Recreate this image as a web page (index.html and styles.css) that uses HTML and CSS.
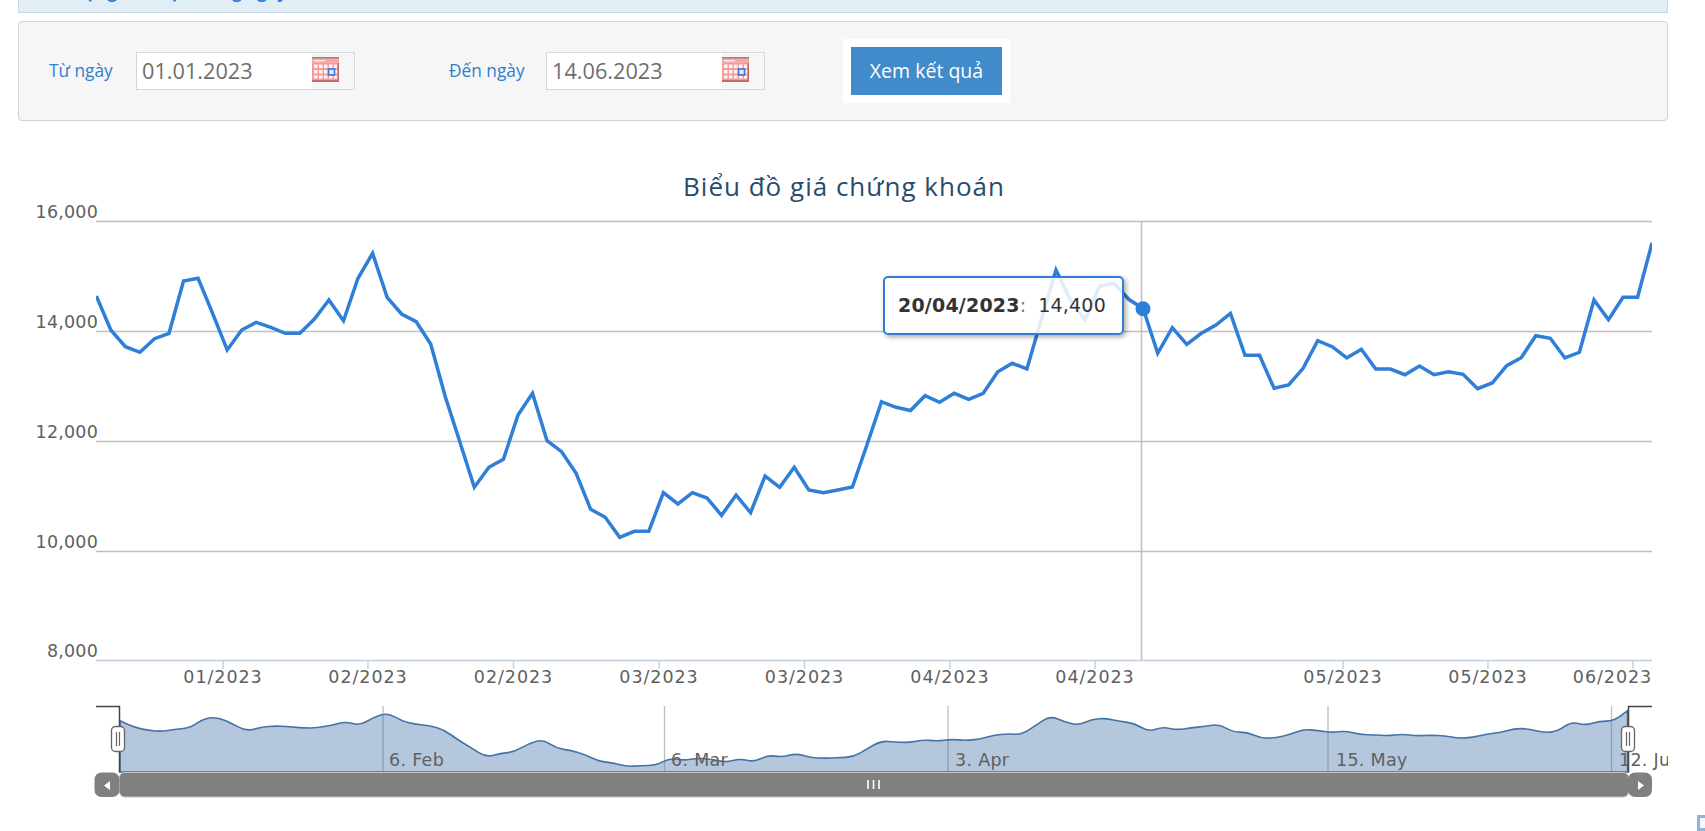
FILE: index.html
```html
<!DOCTYPE html>
<html lang="vi">
<head>
<meta charset="utf-8">
<title>Biểu đồ giá chứng khoán</title>
<link rel="stylesheet" href="styles.css">
</head>
<body>
<div class="page">
  <div class="notice"><span class="notice-text">Khối lượng đã nhận trong ngày</span></div>
  <form class="filter">
    <label class="filter-label label-from">Từ ngày</label>
    <div class="date-field"><span class="date-value">01.01.2023</span>
      <svg class="cal" viewBox="0 0 27 25"><use href="#calicon"/></svg></div>
    <label class="filter-label label-to">Đến ngày</label>
    <div class="date-field"><span class="date-value">14.06.2023</span>
      <svg class="cal" viewBox="0 0 27 25"><use href="#calicon"/></svg></div>
    <div class="submit-wrap"><div class="submit">Xem kết quả</div></div>
  </form>
  <svg width="0" height="0" class="defs">
    <defs>
      <g id="calicon">
        <rect width="27" height="25" fill="#f39c9c"/>
        <rect y="0" width="27" height="1.6" fill="#9c7a7a"/>
        <rect y="1.6" width="27" height="4.4" fill="#f4a8a8"/>
        <rect x="2" y="3" width="11" height="1.6" fill="#fde0e0"/>
        <g fill="#fff3f3">
          <rect x="2" y="7.500" width="3.500" height="3.500"/><rect x="7" y="7.500" width="3.500" height="3.500"/><rect x="12" y="7.500" width="3.500" height="3.500"/><rect x="17" y="7.500" width="3.500" height="3.500"/><rect x="22" y="7.500" width="3" height="3.500"/>
          <rect x="2" y="13" width="3.500" height="3.500"/><rect x="7" y="13" width="3.500" height="3.500"/><rect x="12" y="13" width="3.500" height="3.500"/><rect x="22" y="13" width="3" height="3.500"/>
          <rect x="2" y="18.500" width="3.500" height="3"/><rect x="7" y="18.500" width="3.500" height="3"/><rect x="12" y="18.500" width="3.500" height="3"/><rect x="17" y="18.500" width="3.500" height="3"/><rect x="22" y="18.500" width="3" height="3"/>
        </g>
        <rect x="16.500" y="12" width="6" height="6" fill="#dfe9ff" stroke="#3f73d8" stroke-width="1.6"/>
        <rect y="23" width="27" height="2" fill="#c46a6a"/>
        <rect x="25.600" y="6" width="1.400" height="19" fill="#c46a6a"/>
      </g>
      <clipPath id="plot-clip"><rect x="96" y="221" width="1556" height="440"/></clipPath>
    </defs>
  </svg>
  <div class="chart">
    <svg class="chart-svg" width="1650" height="690" viewBox="18 121 1650 690">
      <text class="title" x="844" y="196" text-anchor="middle">Biểu đồ giá chứng khoán</text>
      <g class="grid">
        <line x1="96" x2="1652" y1="221.500" y2="221.500"/>
        <line x1="96" x2="1652" y1="331.500" y2="331.500"/>
        <line x1="96" x2="1652" y1="441.500" y2="441.500"/>
        <line x1="96" x2="1652" y1="551.500" y2="551.500"/>
      </g>
      <g class="ylabels">
        <text x="98" y="218">16,000</text>
        <text x="98" y="328">14,000</text>
        <text x="98" y="438">12,000</text>
        <text x="98" y="548">10,000</text>
        <text x="98" y="657">8,000</text>
      </g>
      <line class="axis" x1="96" x2="1652" y1="660.500" y2="660.500"/>
      <g class="ticks">
        <line x1="223" x2="223" y1="660" y2="669"/>
        <line x1="368" x2="368" y1="660" y2="669"/>
        <line x1="513.500" x2="513.500" y1="660" y2="669"/>
        <line x1="659" x2="659" y1="660" y2="669"/>
        <line x1="804.500" x2="804.500" y1="660" y2="669"/>
        <line x1="950" x2="950" y1="660" y2="669"/>
        <line x1="1095" x2="1095" y1="660" y2="669"/>
        <line x1="1343" x2="1343" y1="660" y2="669"/>
        <line x1="1488" x2="1488" y1="660" y2="669"/>
        <line x1="1633" x2="1633" y1="660" y2="669"/>
      </g>
      <g class="xlabels">
        <text x="223" y="683">01/2023</text>
        <text x="368" y="683">02/2023</text>
        <text x="513.500" y="683">02/2023</text>
        <text x="659" y="683">03/2023</text>
        <text x="804.500" y="683">03/2023</text>
        <text x="950" y="683">04/2023</text>
        <text x="1095" y="683">04/2023</text>
        <text x="1343" y="683">05/2023</text>
        <text x="1488" y="683">05/2023</text>
        <text x="1612.500" y="683">06/2023</text>
      </g>
      <line class="crosshair" x1="1141.500" x2="1141.500" y1="221" y2="660"/>
      <g clip-path="url(#plot-clip)">
        <polyline class="series" points="96.3,296 110.8,330 125.4,346.7 139.9,352.3 154.5,338.7 169,333.3 183.5,281 198.1,278.3 212.6,313.3 227.2,350 241.7,330 256.2,322.3 270.8,327.3 285.3,333.3 299.9,333.3 314.4,319 328.9,300 343.5,320.7 358,278.3 372.6,253.3 387.1,297.3 401.6,314 416.2,321.7 430.7,344 445.3,396.7 459.8,441.7 474.3,487.3 488.9,467.3 503.4,459.3 518,415 532.5,393.3 547,440.7 561.6,451.7 576.1,473.3 590.7,509.3 605.2,517.3 619.7,537.3 634.3,531.3 648.8,531.3 663.4,492.7 677.9,504 692.4,492.7 707,498 721.5,515.3 736.1,495 750.6,512.7 765.1,476 779.7,487.3 794.2,467.3 808.8,490 823.3,492.7 837.8,490 852.4,487 866.9,445 881.5,401.7 896,407.3 910.5,410.5 925.1,395.7 939.6,402.3 954.2,393.3 968.7,399.3 983.2,393.3 997.8,371.7 1012.3,363.3 1026.9,369 1041.4,319 1056,270 1070.5,300 1085,320 1099.6,286 1114.1,283.3 1128.7,299.3 1143.2,308.7 1157.7,353.3 1172.3,327.7 1186.8,344.3 1201.4,333.3 1215.9,325 1230.4,313.3 1245,355.3 1259.5,355.3 1274.1,388.3 1288.6,385 1303.1,368.3 1317.7,340.7 1332.2,346.7 1346.8,358 1361.3,349.3 1375.8,369 1390.4,369 1404.9,374.7 1419.5,366 1434,374.7 1448.5,371.7 1463.1,374.3 1477.6,388.7 1492.2,383 1506.7,365.7 1521.2,357.7 1535.8,335.7 1550.3,338.3 1564.9,358 1579.4,352.3 1594,300 1608.5,319.7 1623,297.3 1637.6,297.3 1652.1,242.7"/>
      </g>
      <circle class="marker" cx="1143" cy="308.700" r="7.500"/>

      <g class="nav-grid">
        <line x1="383" x2="383" y1="706" y2="772"/>
        <line x1="664.500" x2="664.500" y1="706" y2="772"/>
        <line x1="948" x2="948" y1="706" y2="772"/>
        <line x1="1328" x2="1328" y1="706" y2="772"/>
        <line x1="1611.500" x2="1611.500" y1="706" y2="772"/>
      </g>
      <g transform="translate(26.7 664.6) scale(.969 .19)">
        <path class="nav-series" d="M96.3,296L103.5,313Q110.8,330 118.1,338.4Q125.4,346.7 132.7,349.5Q139.9,352.3 147.2,345.5Q154.5,338.7 161.8,336Q169,333.3 176.3,307.2Q183.5,281 190.8,279.7Q198.1,278.3 205.4,295.8Q212.6,313.3 219.9,331.7Q227.2,350 234.5,340Q241.7,330 249,326.2Q256.2,322.3 263.5,324.8Q270.8,327.3 278.1,330.3Q285.3,333.3 292.6,333.3Q299.9,333.3 307.2,326.2Q314.4,319 321.7,309.5Q328.9,300 336.2,310.4Q343.5,320.7 350.8,299.5Q358,278.3 365.3,265.8Q372.6,253.3 379.9,275.3Q387.1,297.3 394.4,305.7Q401.6,314 408.9,317.9Q416.2,321.7 423.5,332.9Q430.7,344 438,370.4Q445.3,396.7 452.6,419.2Q459.8,441.7 467.1,464.5Q474.3,487.3 481.6,477.3Q488.9,467.3 496.2,463.3Q503.4,459.3 510.7,437.2Q518,415 525.3,404.2Q532.5,393.3 539.8,417Q547,440.7 554.3,446.2Q561.6,451.7 568.9,462.5Q576.1,473.3 583.4,491.3Q590.7,509.3 598,513.3Q605.2,517.3 612.5,527.3Q619.7,537.3 627,534.3Q634.3,531.3 641.6,531.3Q648.8,531.3 656.1,512Q663.4,492.7 670.7,498.4Q677.9,504 685.2,498.4Q692.4,492.7 699.7,495.4Q707,498 714.3,506.7Q721.5,515.3 728.8,505.2Q736.1,495 743.4,503.9Q750.6,512.7 757.9,494.4Q765.1,476 772.4,481.7Q779.7,487.3 787,477.3Q794.2,467.3 801.5,478.7Q808.8,490 816.1,491.4Q823.3,492.7 830.6,491.4Q837.8,490 845.1,488.5Q852.4,487 859.7,466Q866.9,445 874.2,423.4Q881.5,401.7 888.8,404.5Q896,407.3 903.3,408.9Q910.5,410.5 917.8,403.1Q925.1,395.7 932.4,399Q939.6,402.3 946.9,397.8Q954.2,393.3 961.5,396.3Q968.7,399.3 976,396.3Q983.2,393.3 990.5,382.5Q997.8,371.7 1005.1,367.5Q1012.3,363.3 1019.6,366.2Q1026.9,369 1034.2,344Q1041.4,319 1048.7,294.5Q1056,270 1063.3,285Q1070.5,300 1077.8,310Q1085,320 1092.3,303Q1099.6,286 1106.9,284.7Q1114.1,283.3 1121.4,291.3Q1128.7,299.3 1136,304Q1143.2,308.7 1150.5,331Q1157.7,353.3 1165,340.5Q1172.3,327.7 1179.6,336Q1186.8,344.3 1194.1,338.8Q1201.4,333.3 1208.7,329.2Q1215.9,325 1223.2,319.2Q1230.4,313.3 1237.7,334.3Q1245,355.3 1252.3,355.3Q1259.5,355.3 1266.8,371.8Q1274.1,388.3 1281.4,386.7Q1288.6,385 1295.9,376.7Q1303.1,368.3 1310.4,354.5Q1317.7,340.7 1325,343.7Q1332.2,346.7 1339.5,352.4Q1346.8,358 1354.1,353.7Q1361.3,349.3 1368.6,359.2Q1375.8,369 1383.1,369Q1390.4,369 1397.7,371.9Q1404.9,374.7 1412.2,370.4Q1419.5,366 1426.8,370.4Q1434,374.7 1441.3,373.2Q1448.5,371.7 1455.8,373Q1463.1,374.3 1470.4,381.5Q1477.6,388.7 1484.9,385.9Q1492.2,383 1499.5,374.4Q1506.7,365.7 1514,361.7Q1521.2,357.7 1528.5,346.7Q1535.8,335.7 1543.1,337Q1550.3,338.3 1557.6,348.2Q1564.9,358 1572.2,355.2Q1579.4,352.3 1586.7,326.2Q1594,300 1601.3,309.9Q1608.5,319.7 1615.8,308.5Q1623,297.3 1630.3,297.3Q1637.6,297.3 1644.9,270L1652.1,242.7V565.3H96.3Z"/>
      </g>
      <g class="nav-labels">
        <text x="389" y="766">6. Feb</text>
        <text x="671" y="766">6. Mar</text>
        <text x="955" y="766">3. Apr</text>
        <text x="1336" y="766">15. May</text>
        <text x="1619" y="766">12. Jun</text>
      </g>

      <path class="nav-frame" d="M96 706.500H119.500V772.500M1652 706.500H1628.500V772.500"/>
      <g class="handle">
        <rect x="111.500" y="726.500" width="13" height="25" rx="4"/>
        <path d="M116.500 732V746M119.500 732V746"/>
      </g>
      <g class="handle">
        <rect x="1621.500" y="726.500" width="13" height="25" rx="4"/>
        <path d="M1626.500 732V746M1629.500 732V746"/>
      </g>
      <rect class="scroll-track" x="119.500" y="772.500" width="1509" height="24.500" rx="5"/>
      <rect class="scroll-btn" x="94.500" y="772.500" width="25" height="24.500" rx="7"/>
      <rect class="scroll-btn" x="1628" y="772.500" width="24" height="24.500" rx="7"/>
      <path class="scroll-arrow" d="M110 781L104 785.500L110 790Z"/>
      <path class="scroll-arrow" d="M1638 781L1644 785.500L1638 790Z"/>
      <path class="scroll-grip" d="M868 780V789M873.500 780V789M879 780V789"/>
    </svg>
    <div class="tooltip"><b>20/04/2023</b><span class="tip-colon">:</span><span class="tip-value">14,400</span></div>
  </div>
  <div class="corner-mark"></div>
</div>
</body>
</html>
```
FILE: styles.css
```css
html, body {
  margin: 0;
  padding: 0;
  height: 100%;
  background: #fff;
  overflow: hidden;
}
.page {
  position: relative;
  width: 1705px;
  height: 831px;
  overflow: hidden;
}
.notice {
  box-sizing: border-box;
  margin: 0 37px 0 18px;
  height: 13px;
  background: #e2eef6;
  border: 1px solid #c8d6e2;
  border-top: 0;
  overflow: hidden;
}
.notice-text {
  display: block;
  margin: -18px 0 0 5px;
  font: bold 17px/20px "Open Sans", sans-serif;
  color: #2f7ed8;
  white-space: nowrap;
}
.filter {
  box-sizing: border-box;
  display: flex;
  align-items: center;
  margin: 8px 37px 0 18px;
  height: 100px;
  background: #f6f6f6;
  border: 1px solid #d2d2d2;
  border-radius: 4px;
  padding-left: 30px;
}
.filter-label {
  font: 17.3px/20px "Open Sans", sans-serif;
  color: #2f7fd0;
  white-space: nowrap;
}
.label-from { width: 87px; }
.label-to { width: 97px; margin-left: 94px; }
.date-field {
  box-sizing: border-box;
  position: relative;
  width: 219px;
  height: 38px;
  border: 1px solid #d8d8d8;
  display: flex;
  align-items: center;
  background: linear-gradient(to right, #fff 175px, #f6f6f6 175px);
}
.date-value {
  padding-left: 5px;
  font: 21.7px/24px "Open Sans", sans-serif;
  color: #6e6e6e;
}
.cal {
  position: absolute;
  left: 175px;
  top: 4px;
  width: 27px;
  height: 25px;
}
.submit-wrap {
  margin-left: 78px;
  padding: 8px;
  background: #fff;
}
.submit {
  width: 151px;
  height: 48px;
  background: #428bca;
  color: #fff;
  font: 19.5px/48px "Open Sans", sans-serif;
  text-align: center;
}
.defs { position: absolute; }
.chart {
  position: relative;
  margin: 0 37px 0 18px;
  height: 690px;
  overflow: hidden;
}
.chart-svg { display: block; }
.title {
  font: 26px "Open Sans", sans-serif;
  letter-spacing: 1px;
  fill: #274b6d;
}
.grid line { stroke: #c0c0c0; stroke-width: 1.4; }
.ylabels text {
  font: 17.5px "DejaVu Sans", sans-serif;
  letter-spacing: .2px;
  fill: #606060;
  text-anchor: end;
}
.axis { stroke: #c0d0e0; stroke-width: 1.6; }
.ticks line { stroke: #c0d0e0; stroke-width: 1.4; }
.xlabels text {
  font: 17.5px "DejaVu Sans", sans-serif;
  fill: #606060;
  text-anchor: middle;
  letter-spacing: .95px;
}
.crosshair { stroke: #c0c0c0; stroke-width: 1.6; }
.series {
  fill: none;
  stroke: #2f7ed8;
  stroke-width: 3.5;
  stroke-linejoin: miter;
}
.marker { fill: #2f7ed8; }
.nav-grid line { stroke: #c0c0c0; stroke-width: 1.4; }
.nav-series {
  fill: rgba(69, 114, 167, .4);
  stroke: #4572a7;
  stroke-width: 1.6;
  vector-effect: non-scaling-stroke;
}
.nav-labels text {
  font: 17.5px "DejaVu Sans", sans-serif;
  letter-spacing: .3px;
  fill: #606060;
}
.nav-frame { fill: none; stroke: #444; stroke-width: 1.5; }
.handle rect { fill: #fff; stroke: #666; stroke-width: 1.3; }
.handle path { fill: none; stroke: #666; stroke-width: 1.2; }
.scroll-track { fill: #808080; stroke: #c4c4c4; stroke-width: 1; }
.scroll-btn { fill: #808080; }
.scroll-arrow { fill: #fff; }
.scroll-grip { fill: none; stroke: #fff; stroke-width: 1.6; }
.tooltip {
  box-sizing: border-box;
  position: absolute;
  left: 865px;
  top: 155px;
  width: 241px;
  height: 59px;
  padding-left: 13px;
  background: rgba(255, 255, 255, .85);
  border: 2px solid #2f7ed8;
  border-radius: 5px;
  box-shadow: 2px 2px 5px rgba(0, 0, 0, .35);
  font: 19px/55px "DejaVu Sans", sans-serif;
  letter-spacing: .2px;
  color: #333;
  white-space: nowrap;
}
.tip-colon { color: #777; }
.tip-value { margin-left: 12px; }
.corner-mark {
  position: absolute;
  left: 1697px;
  top: 815px;
  width: 8px;
  height: 16px;
  box-sizing: border-box;
  background: #f4f8fc;
  border: 3px solid #8db4d8;
  border-right-width: 0;
}
```
